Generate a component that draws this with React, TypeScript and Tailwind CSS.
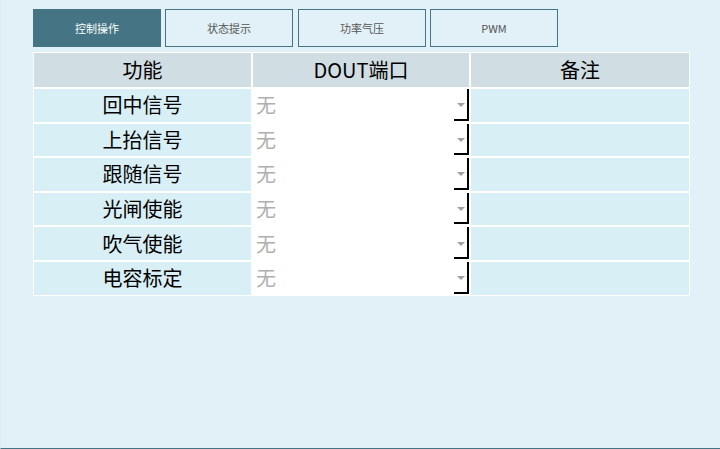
const tabs = ['控制操作', '状态提示', '功率气压', 'PWM'];
const rows = ['回中信号', '上抬信号', '跟随信号', '光闸使能', '吹气使能', '电容标定'];

const font = { fontFamily: '"Noto Sans CJK SC", "Liberation Sans", sans-serif' };

const Tab = ({ label, active, className }: { label: string; active: boolean; className?: string }) => (
  <button
    className={
      'h-[38px] w-[128px] text-[11px] flex items-center justify-center ' +
      (active
        ? 'bg-[#457585] text-white '
        : 'border border-[#457585] bg-[#e2f1f7] text-[#555] ') +
      (className || '')
    }
  >
    {label}
  </button>
);

const Dropdown = () => (
  <div className="relative h-full bg-white">
    <span className="absolute left-[3px] top-1/2 -translate-y-1/2 text-[20px] leading-none text-[#b0b0b0]">无</span>
    <span className="absolute right-[4px] top-1/2 -translate-y-[2px] h-0 w-0 border-x-[4px] border-t-[4px] border-x-transparent border-t-[#a0a0a0]" />
    <span className="absolute right-0 top-0 bottom-[1px] w-[2px] bg-black" />
    <span className="absolute right-0 bottom-[1px] h-[2px] w-[15px] bg-black" />
  </div>
);

export default function App() {
  return (
    <div
      className="w-[720px] h-[449px] bg-[#e2f1f7] border-l border-l-[#e6e9ea] border-b border-b-[#457585] pl-[32px] pt-[9px]"
      style={font}
    >
      <div className="flex">
        <Tab label={tabs[0]} active />
        <Tab label={tabs[1]} active={false} className="ml-[4px]" />
        <Tab label={tabs[2]} active={false} className="ml-[5px]" />
        <Tab label={tabs[3]} active={false} className="ml-[4px]" />
      </div>

      <div className="mt-[5px] w-[657px] bg-white p-[1px] grid grid-cols-[217px_216px_218px] gap-[2px]">
        <div className="h-[34px] bg-[#d0dde2] flex items-center justify-center text-[20px] text-black">功能</div>
        <div className="h-[34px] bg-[#d0dde2] flex items-center justify-center text-[20px] text-black">DOUT端口</div>
        <div className="h-[34px] bg-[#d0dde2] flex items-center justify-center text-[20px] text-black">备注</div>
        {rows.map((r) => (
          <div key={r} className="contents">
            <div className="h-[32.6px] bg-[#d9eff6] flex items-center justify-center text-[20px] text-black">{r}</div>
            <Dropdown />
            <div className="h-[32.6px] bg-[#d9eff6]" />
          </div>
        ))}
      </div>
    </div>
  );
}
